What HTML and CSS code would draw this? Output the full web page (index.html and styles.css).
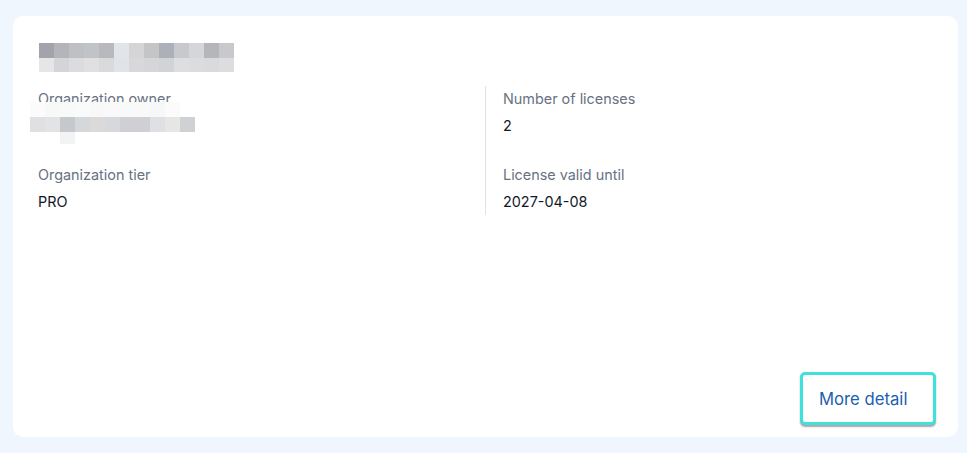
FILE: index.html
```html
<!DOCTYPE html>
<html lang="en">
<head>
<meta charset="utf-8">
<title>Organization</title>
<link rel="stylesheet" href="styles.css">
</head>
<body>
<main class="card">
  <div class="pix pix-title" aria-label="Organization name (redacted)">
    <span></span><span></span><span></span><span></span><span></span><span></span><span></span><span></span><span></span><span></span><span></span><span></span><span></span>
    <span></span><span></span><span></span><span></span><span></span><span></span><span></span><span></span><span></span><span></span><span></span><span></span><span></span>
  </div>
  <section class="details">
    <div class="col col-left">
      <div class="item">
        <div class="label">Organization owner</div>
        <div class="value value-hidden">&nbsp;</div>
        <div class="pix pix-owner" aria-label="Owner (redacted)">
          <span></span><span></span><span></span><span></span><span></span><span></span><span></span><span></span><span></span><span></span><span></span>
          <span></span><span></span><span></span><span></span><span></span><span></span><span></span><span></span><span></span><span></span><span></span>
          <span class="e"></span><span class="e"></span><span></span>
        </div>
      </div>
      <div class="item">
        <div class="label">Organization tier</div>
        <div class="value">PRO</div>
      </div>
    </div>
    <div class="col col-right">
      <div class="item">
        <div class="label">Number of licenses</div>
        <div class="value">2</div>
      </div>
      <div class="item">
        <div class="label">License valid until</div>
        <div class="value">2027-04-08</div>
      </div>
    </div>
  </section>
  <div class="spacer"></div>
  <button class="more" type="button">More detail</button>
</main>
</body>
</html>
```

FILE: styles.css
```css
* { box-sizing: border-box; }

html, body {
  margin: 0;
  padding: 0;
  background: #eff6fe;
  font-family: Inter, "Noto Sans", "Liberation Sans", sans-serif;
}

body {
  padding: 16px 9px 16px 13px;
  height: 453px;
}

.card {
  width: 945px;
  height: 421px;
  background: #ffffff;
  border-radius: 10px;
  padding: 27px 22px 12px 25px;
  display: flex;
  flex-direction: column;
}

.pix {
  display: grid;
  grid-auto-rows: 15px;
}

.pix-title {
  grid-template-columns: repeat(13, 15px);
  grid-template-rows: 15px 14px;
  margin-left: 1px;
  width: 195px;
}

.pix-title span:nth-child(1)  { background: #a3a3ab; }
.pix-title span:nth-child(2)  { background: #b4b5ba; }
.pix-title span:nth-child(3)  { background: #bfc0c4; }
.pix-title span:nth-child(4)  { background: #c0c4c8; }
.pix-title span:nth-child(5)  { background: #b8b9bd; }
.pix-title span:nth-child(6)  { background: #e1e5ea; }
.pix-title span:nth-child(7)  { background: #d5d5d7; }
.pix-title span:nth-child(8)  { background: #c4c5c7; }
.pix-title span:nth-child(9)  { background: #adb0b8; }
.pix-title span:nth-child(10) { background: #c8c9cd; }
.pix-title span:nth-child(11) { background: #d5d6da; }
.pix-title span:nth-child(12) { background: #b5b6ba; }
.pix-title span:nth-child(13) { background: #c8c9cd; }
.pix-title span:nth-child(14) { background: #e6e6e8; }
.pix-title span:nth-child(15) { background: #d5d5d9; }
.pix-title span:nth-child(16) { background: #dcdcde; }
.pix-title span:nth-child(17) { background: #e0e0e2; }
.pix-title span:nth-child(18) { background: #dadadd; }
.pix-title span:nth-child(19) { background: #e0e4e8; }
.pix-title span:nth-child(20) { background: #d8d8da; }
.pix-title span:nth-child(21) { background: #d6d6d9; }
.pix-title span:nth-child(22) { background: #d2d3d7; }
.pix-title span:nth-child(23) { background: #dedee0; }
.pix-title span:nth-child(24) { background: #dcdcde; }
.pix-title span:nth-child(25) { background: #dadadc; }
.pix-title span:nth-child(26) { background: #dddde0; }

.details {
  margin-top: 14px;
  display: grid;
  grid-template-columns: 447px 1fr;
}

.col {
  padding: 3px 0;
  display: flex;
  flex-direction: column;
  gap: 29px;
}

.col-right {
  border-left: 1px solid #dde3ea;
  padding-left: 17px;
}

.item {
  position: relative;
  display: flex;
  flex-direction: column;
  gap: 7px;
}

.label {
  font-size: 14.4px;
  line-height: 20px;
  color: #687282;
}

.value {
  font-size: 14.4px;
  line-height: 20px;
  color: #111827;
}

.pix-owner {
  position: absolute;
  top: 13px;
  left: -8px;
  grid-template-columns: repeat(11, 15px);
  grid-template-rows: 15px 15px 12px;
  width: 165px;
}

.pix-owner span:nth-child(1)  { background: #fbfbfb; }
.pix-owner span:nth-child(2)  { background: #f7f8f8; }
.pix-owner span:nth-child(3)  { background: #f8f9f9; }
.pix-owner span:nth-child(4)  { background: #f9fafa; }
.pix-owner span:nth-child(5)  { background: #f8f8f9; }
.pix-owner span:nth-child(6)  { background: #f9f9fa; }
.pix-owner span:nth-child(7)  { background: #f8f9f9; }
.pix-owner span:nth-child(8)  { background: #f9f9fa; }
.pix-owner span:nth-child(9)  { background: #f6f7f7; }
.pix-owner span:nth-child(10) { background: #fbfbfb; }
.pix-owner span:nth-child(11) { background: #ffffff; }
.pix-owner span:nth-child(12) { background: #e0e0e2; }
.pix-owner span:nth-child(13) { background: #e3e3e5; }
.pix-owner span:nth-child(14) { background: #c5c8cc; }
.pix-owner span:nth-child(15) { background: #d4d8da; }
.pix-owner span:nth-child(16) { background: #dcd9da; }
.pix-owner span:nth-child(17) { background: #d6d8dc; }
.pix-owner span:nth-child(18) { background: #d0d0d4; }
.pix-owner span:nth-child(19) { background: #d0d0d4; }
.pix-owner span:nth-child(20) { background: #dfe0e4; }
.pix-owner span:nth-child(21) { background: #e6e6e4; }
.pix-owner span:nth-child(22) { background: #cfd1d5; }
.pix-owner span.e { background: transparent; }
.pix-owner span:nth-child(25) { background: #f2f4f4; }

.spacer { flex: 1; }

.more {
  align-self: flex-end;
  height: 53px;
  width: 136px;
  padding: 0 0 0 16px;
  text-align: left;
  background: #ffffff;
  border: 3px solid #3fe1dc;
  border-radius: 5px;
  box-shadow: 0 1.5px 1.5px rgba(60, 60, 60, 0.45);
  font-family: Inter, "Noto Sans", "Liberation Sans", sans-serif;
  font-size: 16.7px;
  color: #1d5eb0;
  cursor: pointer;
}
```
